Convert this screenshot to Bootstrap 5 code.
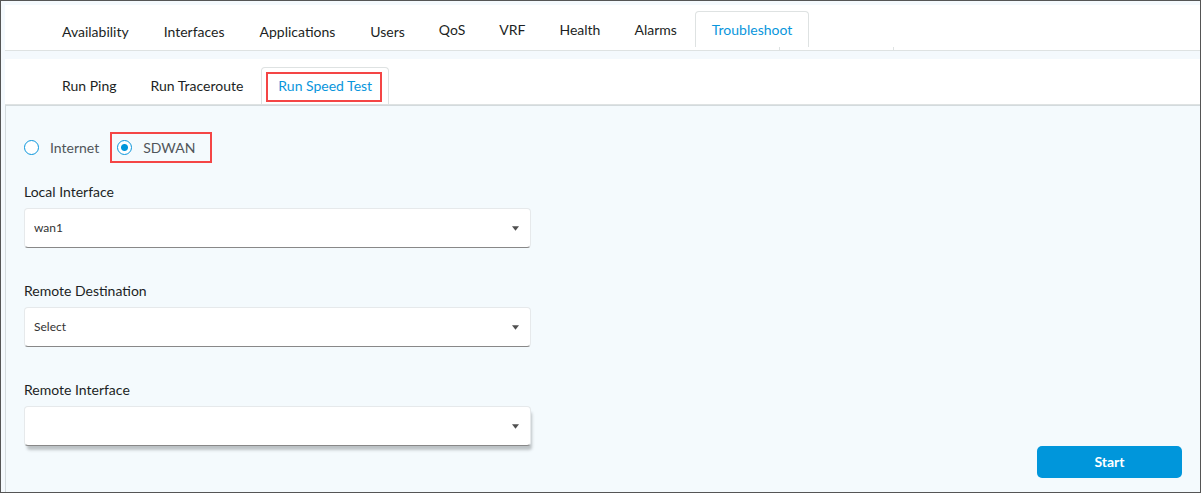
<!DOCTYPE html>
<html lang="en">
<head>
<meta charset="utf-8">
<meta name="viewport" content="width=device-width, initial-scale=1">
<title>Troubleshoot - Run Speed Test</title>
<link href="https://cdn.jsdelivr.net/npm/bootstrap@5.3.0/dist/css/bootstrap.min.css" rel="stylesheet">
<style>
  body { font-family: Lato, sans-serif; font-size: 14px; line-height: 20px; color: #1c1f24; background: #f4f9fd; }
  .frame { border: 1px solid #555; padding: 4px 0 0 4px; }
  .tab-bar { background: #fff; height: 46px; padding-left: 40px; --bs-nav-tabs-border-color: #dee2e2; --bs-nav-tabs-border-radius: 4px; }
  .tab-bar .nav-link { padding: 8px 16px 7px; line-height: 20px; color: #1c1f24; margin: 0; border-bottom: 0; white-space: nowrap; }
  .tab-bar .nav-link.active { color: #0a96dc; border-color: #dee2e2; }
  .tab-bar .nav-item:last-child, .low + .low { margin-left: 1px; }
  .main-tabs { padding-top: 6px; }
  .main-tabs .low .nav-link { padding-top: 10px; }
  /* ends of the menu strip that shows below the open tab */
  .tab-ticks { left: 84px; width: 115px; height: 3px; top: 36px; border: solid #dee2e2; border-width: 0 1px; }
  .sub-tabs { margin-top: 8px; padding-top: 8px; border-color: #dee2e2; }
  .sub-tabs .nav-link { padding-bottom: 8px; }
  .marker { border: 2px solid #f44545; }
  .tab-marker { inset: 5px 7px 2px 5px; pointer-events: none; }
  .panel { border-left: 1px solid #d3dadd; border-top: 1px solid #d3dadd; background: #f4fafd; padding: 26px 18px 14px; }
  .fields { max-width: 507px; }
  .option { height: 31px; }
  .option .form-check-input { width: 15px; height: 15px; border: 1px solid #0a96dc; margin: 0 11px 0 0; background-color: #fff; box-shadow: none; }
  .option .form-check-input:checked { background-image: radial-gradient(circle, #0096db 3px, #fff 4px); }
  .option label { color: #50555a; }
  .option.marker { padding: 0 15px 0 5px; margin-left: 11px; }
  .field-label { margin-bottom: 6px; }
  .field-block + .field-block { margin-top: 33px; }
  .field-block:nth-child(2) { margin-top: 19px; }
  .form-select { height: 40px; padding: 0 32px 0 9px; font-size: 12px; color: #333; border: 1px solid #e6e9eb; border-bottom-color: #888; border-radius: 4px;
    background-image: url("data:image/svg+xml,%3Csvg xmlns='http://www.w3.org/2000/svg' viewBox='0 0 6 4'%3E%3Cpath d='M0 0h6L3 4z' fill='%23505050'/%3E%3C/svg%3E"); background-size: 7px 5px; background-position: right 11px center; }
  .form-select.lifted { box-shadow: 2px 5px 3px -1px rgba(60,65,70,.3); }
  .btn-start { width: 145px; height: 32px; padding: 0 0 2px; font-size: 14px; font-weight: 700; color: #fff; background: #0096db; border: 0; border-radius: 5px; }
  .btn-start:hover { background: #0085c4; color: #fff; }
</style>
</head>
<body>
<div class="frame min-vh-100 d-flex flex-column">
  <nav aria-label="Device views">
    <ul class="nav nav-tabs flex-nowrap tab-bar main-tabs">
      <li class="nav-item low"><a class="nav-link" href="#">Availability</a></li>
      <li class="nav-item low"><a class="nav-link" href="#">Interfaces</a></li>
      <li class="nav-item low"><a class="nav-link" href="#">Applications</a></li>
      <li class="nav-item low"><a class="nav-link" href="#">Users</a></li>
      <li class="nav-item"><a class="nav-link" href="#">QoS</a></li>
      <li class="nav-item"><a class="nav-link" href="#">VRF</a></li>
      <li class="nav-item"><a class="nav-link" href="#">Health</a></li>
      <li class="nav-item"><a class="nav-link" href="#">Alarms</a></li>
      <li class="nav-item position-relative"><a class="nav-link active" aria-current="page" href="#">Troubleshoot</a><span class="tab-ticks position-absolute"></span></li>
    </ul>
  </nav>
  <nav aria-label="Tools">
    <ul class="nav nav-tabs flex-nowrap tab-bar sub-tabs">
      <li class="nav-item"><a class="nav-link" href="#">Run Ping</a></li>
      <li class="nav-item"><a class="nav-link" href="#">Run Traceroute</a></li>
      <li class="nav-item position-relative"><a class="nav-link active" aria-current="page" href="#">Run Speed Test</a><span class="marker tab-marker position-absolute"></span></li>
    </ul>
  </nav>
  <main class="panel flex-grow-1 d-flex justify-content-between">
    <form class="fields w-100" id="speed-test">
      <div class="d-flex">
        <div class="option d-flex align-items-center"><input class="form-check-input" type="radio" name="network" id="internet"><label for="internet">Internet</label></div>
        <div class="option marker d-flex align-items-center"><input class="form-check-input" type="radio" name="network" id="sdwan" checked><label for="sdwan">SDWAN</label></div>
      </div>
      <div class="field-block">
        <label class="field-label d-block" for="local">Local Interface</label>
        <select class="form-select" id="local"><option>wan1</option></select>
      </div>
      <div class="field-block">
        <label class="field-label d-block" for="destination">Remote Destination</label>
        <select class="form-select" id="destination"><option>Select</option></select>
      </div>
      <div class="field-block">
        <label class="field-label d-block" for="remote">Remote Interface</label>
        <select class="form-select lifted" id="remote"><option></option></select>
      </div>
    </form>
    <button class="btn btn-start align-self-end flex-shrink-0" type="submit" form="speed-test">Start</button>
  </main>
</div>
<script src="https://cdn.jsdelivr.net/npm/bootstrap@5.3.0/dist/js/bootstrap.bundle.min.js"></script>
</body>
</html>
